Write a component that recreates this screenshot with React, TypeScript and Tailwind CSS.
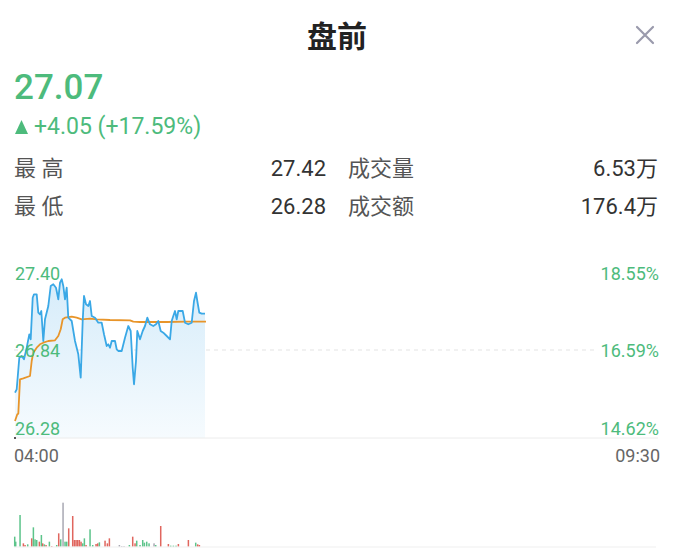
import React from "react";

const blueRaw: [number, number][] = [
  [45, 425], [50, 415], [58, 320], [65, 315], [72, 325], [80, 290], [88, 250], [92, 265], [98, 140],
  [102, 130], [110, 130], [115, 185], [120, 190], [124, 180], [130, 270], [135, 205], [145, 165],
  [152, 105], [160, 100], [168, 110], [175, 145], [180, 95], [185, 85], [190, 105], [195, 145],
  [200, 110], [205, 200], [215, 210], [225, 270], [235, 310], [242, 380], [248, 210], [252, 135],
  [258, 160], [265, 165], [270, 150], [275, 195], [285, 200], [295, 215], [305, 215], [312, 250],
  [320, 285], [325, 280], [330, 290], [335, 270], [345, 270], [350, 295], [355, 300], [365, 300],
  [375, 260], [385, 225], [392, 240], [398, 350], [402, 400], [408, 330], [412, 240], [420, 265],
  [428, 240], [435, 225], [442, 200], [450, 220], [460, 225], [468, 220], [475, 210], [482, 240],
  [490, 245], [500, 255], [510, 265], [515, 210], [520, 195], [525, 180], [530, 205], [535, 180],
  [548, 180], [555, 215], [565, 220], [575, 215], [582, 150], [588, 125], [592, 150], [598, 185],
  [605, 188], [615, 188],
];

const orangeRaw: [number, number][] = [
  [45, 510], [52, 490], [55, 488], [60, 385], [70, 382], [90, 375], [95, 330], [100, 305], [110, 290],
  [120, 280], [130, 275], [145, 270], [165, 268], [175, 255], [182, 235], [188, 205], [195, 200],
  [215, 197], [230, 200], [245, 205], [270, 203], [290, 205], [330, 207], [390, 208], [400, 212],
  [420, 213], [500, 213], [560, 212], [618, 212],
];

const toPage = (pts: [number, number][]) =>
  pts.map(([x, y]) => [x / 3, y / 3 + 250] as [number, number]);

const blue = toPage(blueRaw);
const orange = toPage(orangeRaw);
const line = (pts: [number, number][]) => pts.map(([x, y]) => `${x.toFixed(1)},${y.toFixed(1)}`).join(" ");
const area =
  `M${blue[0][0]},437 ` +
  blue.map(([x, y]) => `L${x.toFixed(1)},${y.toFixed(1)}`).join(" ") +
  ` L${blue[blue.length - 1][0]},437 Z`;

// volume bars: [x, top] in 3x crop coords, baseline 170
const bars: [number, number, "g" | "r" | "n"][] = [
  [44, 140, "g"], [47, 155, "g"], [60, 75, "g"], [70, 160, "r"], [75, 165, "r"], [83, 163, "g"],
  [95, 145, "r"], [100, 112, "g"], [105, 148, "g"], [110, 150, "g"], [118, 155, "r"], [124, 135, "g"],
  [128, 160, "r"], [133, 163, "g"], [138, 165, "r"], [148, 155, "g"], [155, 168, "r"], [170, 165, "g"],
  [176, 130, "r"], [182, 148, "g"], [189, 38, "n"], [195, 155, "g"], [200, 155, "g"], [206, 115, "r"],
  [218, 78, "r"], [223, 150, "r"], [228, 150, "r"], [233, 150, "r"], [238, 150, "r"], [243, 155, "r"],
  [248, 160, "g"], [253, 145, "g"], [258, 165, "r"], [270, 118, "g"], [278, 165, "g"], [288, 162, "r"],
  [293, 160, "r"], [298, 157, "g"], [315, 152, "r"], [322, 160, "r"], [328, 145, "r"], [358, 165, "n"],
  [365, 168, "n"], [372, 168, "n"], [388, 165, "g"], [398, 140, "r"], [405, 160, "r"], [410, 152, "g"],
  [420, 165, "g"], [428, 150, "g"], [433, 158, "g"], [440, 155, "g"], [447, 160, "g"], [462, 160, "n"],
  [467, 165, "g"], [482, 108, "r"], [505, 162, "r"], [512, 167, "g"], [520, 167, "g"], [528, 167, "g"],
  [535, 162, "r"], [565, 150, "r"], [587, 158, "g"], [593, 163, "r"], [598, 165, "r"],
];

const barColor = { g: "#5cc48a", r: "#e0665e", n: "#a9a9b3" };

function StatRow({ l1, v1, l2, v2 }: { l1: string; v1: string; l2: string; v2: string }) {
  return (
    <div className="flex h-[38px] items-center pl-[14px] pr-[16px] text-[22px] leading-none">
      <div className="flex w-[312px] justify-between">
        <span className="text-[#555]">{l1}</span>
        <span className="text-[#333]">{v1}</span>
      </div>
      <div className="ml-[22px] flex flex-1 justify-between">
        <span className="text-[#555]">{l2}</span>
        <span className="text-[#333]">{v2}</span>
      </div>
    </div>
  );
}

export default function App() {
  return (
    <div className="relative h-[556px] w-[674px] overflow-hidden bg-white font-['Roboto','Noto_Sans_CJK_SC',sans-serif]">
      {/* header */}
      <div className="relative flex h-[70px] items-center justify-center pt-[4px]">
        <h1 className="text-[30px] font-bold leading-none text-[#222]">盘前</h1>
        <svg className="absolute right-[19px] top-[25px]" width="20" height="20" viewBox="0 0 20 20">
          <path d="M2 2 L18 18 M18 2 L2 18" stroke="#9a9aac" strokeWidth="2.2" strokeLinecap="round" />
        </svg>
      </div>

      {/* price */}
      <div className="px-[14px]">
        <div className="text-[35px] font-medium leading-none text-[#4dbb7c]">27.07</div>
        <div className="mt-[10px] flex items-center text-[23px] leading-none text-[#4dbb7c]">
          <svg className="ml-[1px] mr-[6px]" width="13" height="14" viewBox="0 0 13 14">
            <path d="M6.5 0 L13 14 L0 14 Z" fill="#4dbb7c" />
          </svg>
          <span>+4.05 (+17.59%)</span>
        </div>
      </div>

      {/* stats */}
      <div className="mt-[12px]">
        <StatRow l1="最 高" v1="27.42" l2="成交量" v2="6.53万" />
        <StatRow l1="最 低" v1="26.28" l2="成交额" v2="176.4万" />
      </div>

      {/* chart */}
      <div className="relative mx-[14px] mt-[37px] h-[176px]">
        <svg className="block" width="644" height="176" viewBox="14 262 644 176">
          <defs>
            <linearGradient id="fill" x1="0" y1="0" x2="0" y2="1">
              <stop offset="0%" stopColor="#d6ecfa" />
              <stop offset="100%" stopColor="#f6fbfe" />
            </linearGradient>
          </defs>
          <line x1="14" y1="349" x2="595" y2="349" stroke="#e3e3e3" strokeWidth="1" strokeDasharray="4 4" />
          <path d={area} fill="url(#fill)" />
          <line x1="14" y1="437" x2="658" y2="437" stroke="#ececec" strokeWidth="1" />
          <polyline points={line(orange)} fill="none" stroke="#e8952a" strokeWidth="1.8" strokeLinejoin="round" />
          <polyline points={line(blue)} fill="none" stroke="#3aa8e6" strokeWidth="1.8" strokeLinejoin="round" />
          <rect x="14" y="436" width="2" height="3" fill="#555" />
        </svg>
        <span className="absolute left-[1px] top-[2px] text-[18px] leading-none text-[#4dbb7c]">27.40</span>
        <span className="absolute left-[1px] top-[79px] text-[18px] leading-none text-[#4dbb7c]">26.84</span>
        <span className="absolute left-[1px] top-[157px] text-[18px] leading-none text-[#4dbb7c]">26.28</span>
        <span className="absolute right-[1px] top-[2px] text-[18px] leading-none text-[#4dbb7c]">18.55%</span>
        <span className="absolute right-[1px] top-[79px] text-[18px] leading-none text-[#4dbb7c]">16.59%</span>
        <span className="absolute right-[1px] top-[157px] text-[18px] leading-none text-[#4dbb7c]">14.62%</span>
      </div>

      {/* time axis */}
      <div className="mx-[14px] mt-[8px] flex justify-between text-[18px] leading-none text-[#666]">
        <span>04:00</span>
        <span>09:30</span>
      </div>

      {/* volume */}
      <svg className="absolute left-0 top-[490px] block" width="674" height="66" viewBox="0 490 674 66">
        {bars.map(([x, top, c], i) => (
          <rect
            key={i}
            x={x / 3 - 0.7}
            y={top / 3 + 490}
            width="1.5"
            height={(170 - top) / 3}
            fill={barColor[c]}
          />
        ))}
        <line x1="14" y1="547" x2="656" y2="547" stroke="#efefef" strokeWidth="1" />
      </svg>
    </div>
  );
}
